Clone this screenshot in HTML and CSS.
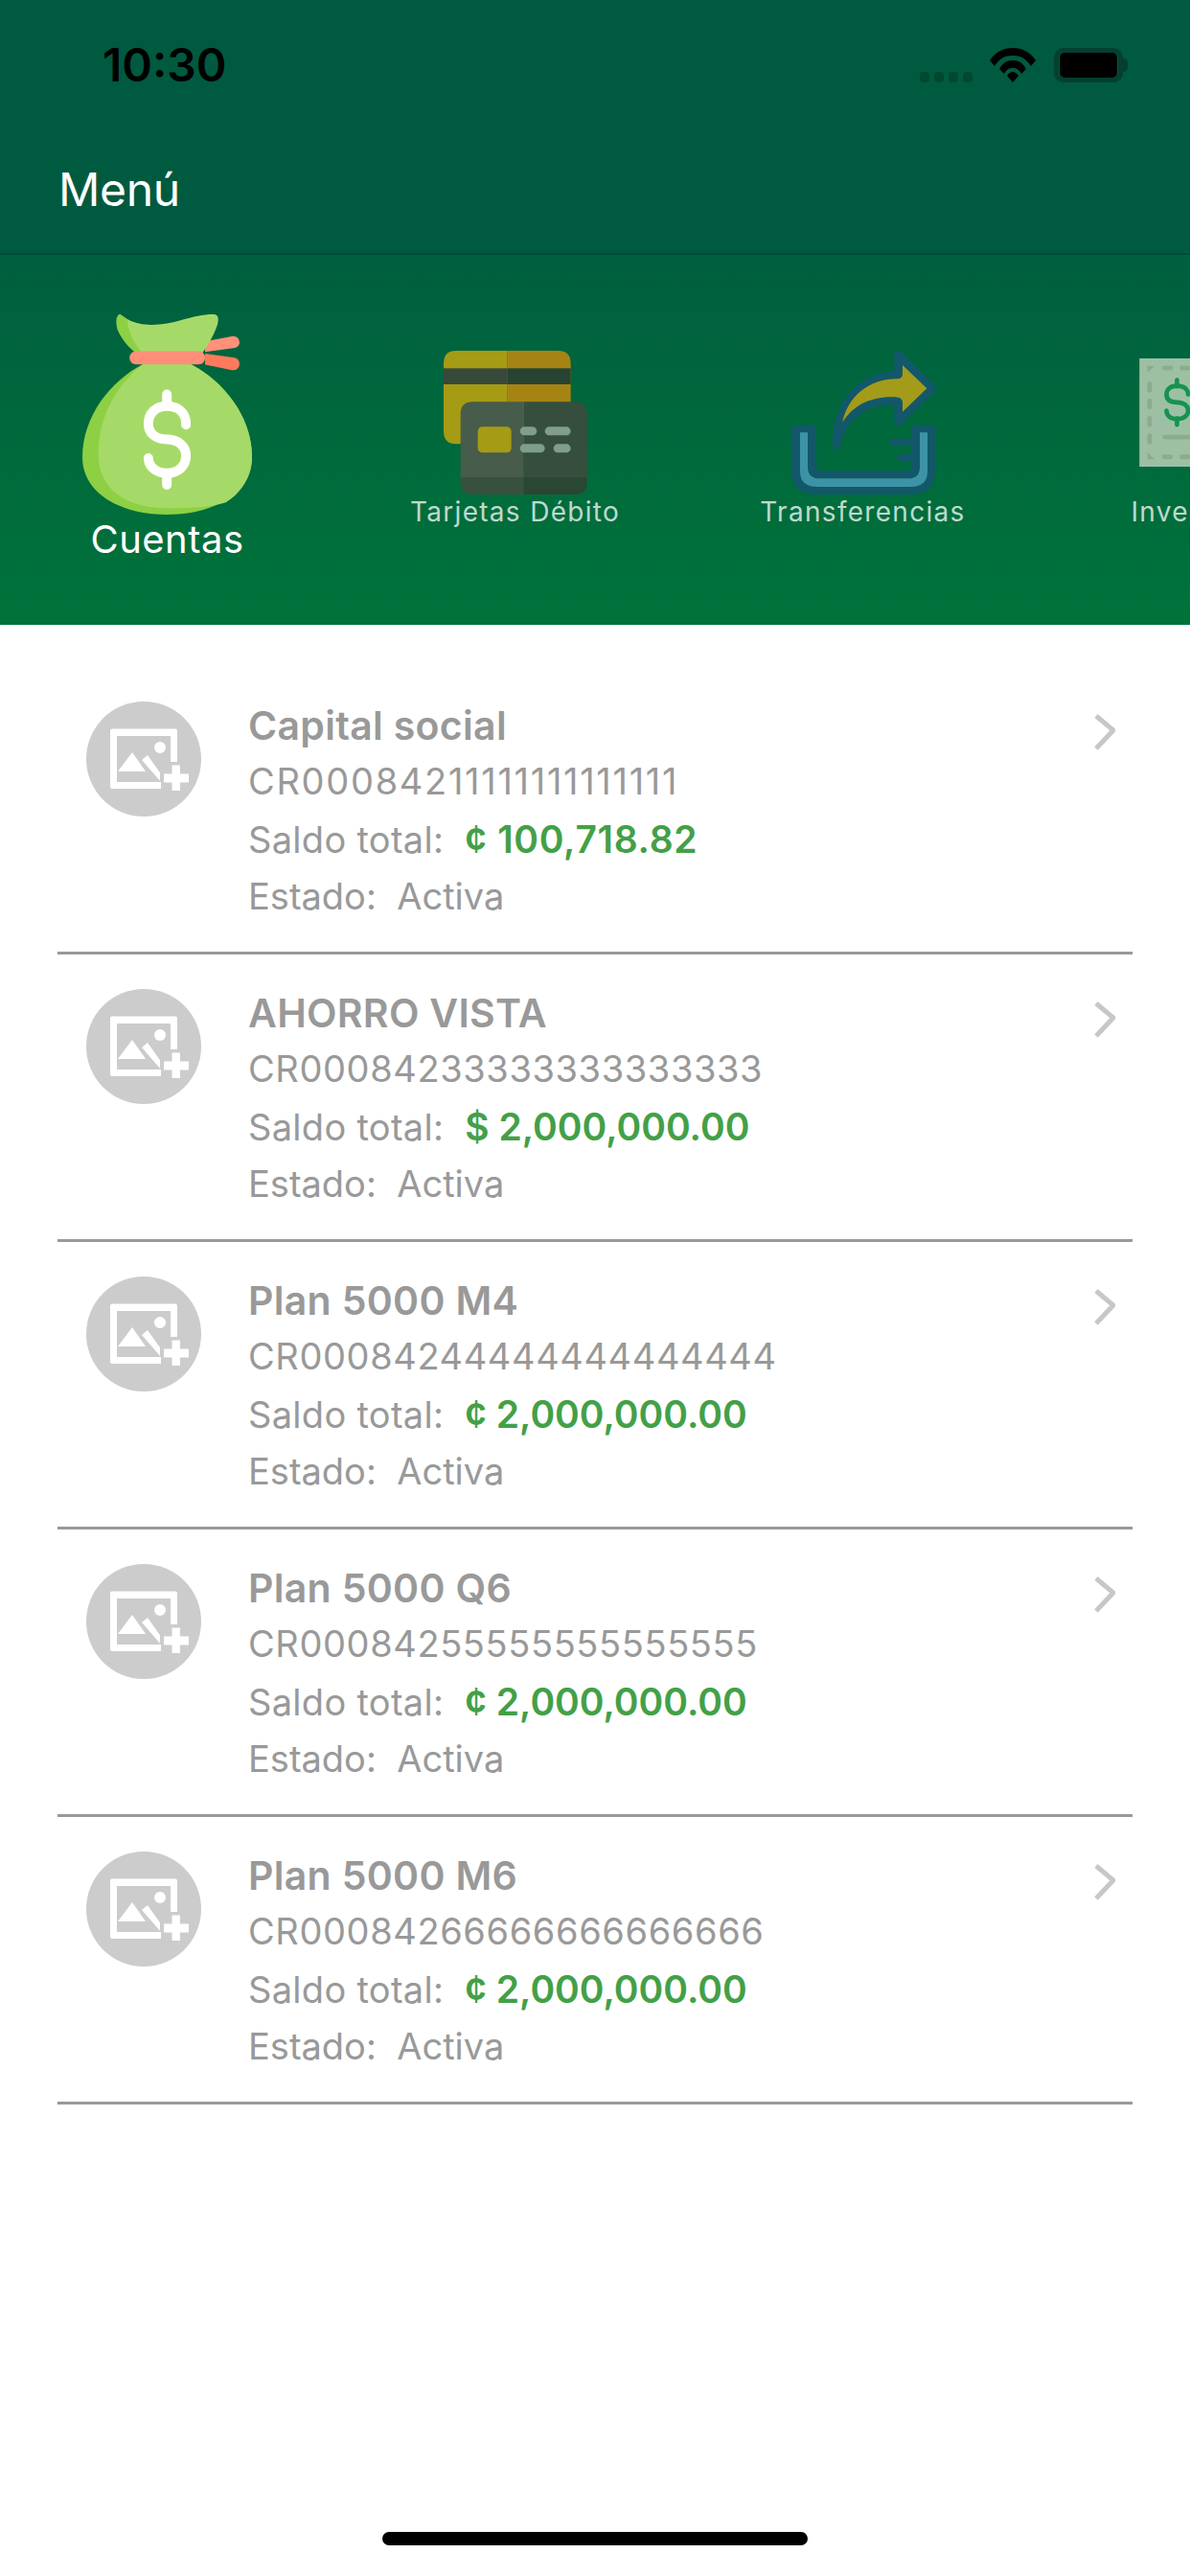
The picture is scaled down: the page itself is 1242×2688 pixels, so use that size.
FILE: index.html
```html
<!DOCTYPE html>
<html lang="es">
<head>
  <meta charset="UTF-8">
  <title>Menú</title>
  <link rel="stylesheet" href="styles.css">
</head>
<body>
  <svg class="defs" width="0" height="0">
    <symbol id="avatar" viewBox="0 0 120 120">
      <circle cx="60" cy="60" r="60" fill="#cccccc"/>
      <path fill="#ffffff" fill-rule="evenodd" d="M27 28.5H93Q95 28.5 95 30.500V91H27Q25 91 25 89V30.500Q25 28.500 27 28.500ZM32 36V84H88V36Z"/>
      <path fill="#ffffff" d="M33 73L48 53L62 73ZM58 61L64 56L84 84H78Z"/>
      <circle cx="77" cy="48" r="6" fill="#ffffff"/>
      <path fill="#cccccc" d="M86 63H100V74H108V90H100V96H78V84H77V74H86Z"/>
      <path fill="#ffffff" d="M89.500 66.500H98V75.500H107V84.500H98V93H89.500V84.500H81V75.500H89.500Z"/>
    </symbol>
  </svg>

  <div class="top-bar">
    <div class="status-bar">
      <span class="time">10:30</span>
      <div class="status-icons">
        <div class="signal"><i></i><i></i><i></i><i></i></div>
        <svg class="wifi" viewBox="0 0 48 36">
          <path d="M0 13C6 4 14 0 24 0S42 4 48 13L43 19C38 11 32 8 24 8S10 11 5 19Z"/>
          <path d="M10 22C14 15 18 13 24 13S34 15 38 22L33 27C30 22 28 21 24 21S18 22 15 27Z"/>
          <path d="M18 29C20 26 22 25 24 25S28 26 30 29L24 36Z"/>
        </svg>
        <div class="battery"><div class="battery-fill"></div></div>
        <div class="battery-nub"></div>
      </div>
    </div>
    <div class="nav-bar">Menú</div>
  </div>

  <div class="menu">
    <div class="menu-item active">
      <svg class="bag" viewBox="140 80 532 632">
        <path fill="#ff9079" d="M525 167L612 150Q632 150 633 170Q632 184 618 187L525 200Z"/>
        <path fill="#ff7a5c" d="M525 205L618 218Q632 222 633 238Q630 258 610 257L525 240Z"/>
        <path fill="#8ed043" d="M330 238C230 290 140 400 140 530C140 650 270 710 405 710C540 710 672 650 672 530C672 400 580 290 480 238Z"/>
        <path fill="#a5da69" d="M330 238C250 300 190 400 190 520C190 640 290 690 405 690C480 690 540 688 590 672C640 640 672 590 672 530C672 400 580 290 480 238Z"/>
        <path fill="#8ed043" d="M258 81C243 85 245 110 250 130C265 165 290 190 310 205H340L300 110Z"/>
        <path fill="#a5da69" d="M282 98C330 125 400 115 450 100C490 88 530 80 555 82C570 85 568 105 560 125C550 150 535 180 515 205H328C300 170 280 130 282 98Z"/>
        <rect x="288" y="198" width="237" height="41" rx="20" fill="#ff8f78"/>
        <g fill="none" stroke="#ffffff" stroke-width="30" stroke-linecap="round">
          <path d="M405 333V358M405 592V617"/>
          <path d="M465 428C465 390 440 370 405 370C370 370 347 392 347 425C347 455 370 474 405 474C440 474 465 495 465 525C465 558 440 580 405 580C370 580 347 558 347 533"/>
        </g>
      </svg>
      <span class="menu-label">Cuentas</span>
    </div>

    <div class="menu-item">
      <svg class="menu-icon" viewBox="190 77 450 450">
        <path fill="#a59b14" d="M230 77H390V369H230Q190 369 190 329V117Q190 77 230 77Z"/>
        <path fill="#a58414" d="M390 77H548Q588 77 588 117V369H390Z"/>
        <rect x="190" y="132" width="200" height="50" fill="#37493b"/>
        <rect x="390" y="132" width="198" height="50" fill="#274333"/>
        <path fill="#475c4b" d="M281 237H441V474H243V275Q243 237 281 237Z"/>
        <path fill="#364e3e" d="M441 237H601Q639 237 639 275V474H441Z"/>
        <path fill="#38503e" d="M243 474H441V527H281Q243 527 243 489Z"/>
        <path fill="#2a4733" d="M441 474H639V489Q639 527 601 527H441Z"/>
        <rect x="297" y="315" width="105" height="81" rx="14" fill="#a59b14"/>
        <g fill="#7f9e8d">
          <rect x="429" y="315" width="53" height="27" rx="13.500"/>
          <rect x="507" y="315" width="81" height="27" rx="13.500"/>
          <rect x="429" y="369" width="78" height="27" rx="13.500"/>
          <rect x="534" y="369" width="54" height="27" rx="13.500"/>
        </g>
      </svg>
      <span class="menu-label">Tarjetas Débito</span>
    </div>

    <div class="menu-item">
      <svg class="menu-icon" viewBox="198 77 450 450">
        <path fill="#12586a" d="M198 322Q198 310 210 310H275V430Q275 453 295 453H555Q575 453 575 430V310H636Q648 310 648 322V450Q648 527 570 527H275Q198 527 198 450Z"/>
        <path fill="#3c93a5" d="M225 333H249V440Q249 477 285 477H565Q600 477 600 440V333H624V455Q624 503 570 503H280Q225 503 225 455Z"/>
        <path stroke="#12586a" stroke-width="22" stroke-linecap="round" d="M515 363H580M541 412H580"/>
        <path fill="#12586a" d="M338 387C325 387 325 360 328 340C340 220 420 145 520 142V90Q530 68 545 85L645 185Q652 195 645 205L545 305Q530 318 520 300V248C440 240 370 290 350 375Q345 387 338 387Z"/>
        <path fill="#a59b1a" d="M546 122L622 195L546 268V235C540 218 520 222 500 222C440 225 390 250 358 300C375 220 440 165 530 165C540 165 546 160 546 150Z"/>
      </svg>
      <span class="menu-label">Transferencias</span>
    </div>

    <div class="menu-item">
      <svg class="menu-icon bill" viewBox="1287 102 450 340">
        <rect x="1287" y="102" width="450" height="340" fill="#9dc0a5"/>
        <g fill="none" stroke="#8bad8d" stroke-width="15" stroke-linecap="round">
          <path d="M1319 182V202M1319 235V255M1319 290V310M1319 345V365M1365 132H1385M1420 132H1440M1365 411H1385M1420 411H1440"/>
        </g>
        <path fill="#8bad8d" d="M1312 125H1335L1312 147ZM1312 396L1335 419H1312Z"/>
        <path fill="none" stroke="#8bad8d" stroke-width="14" stroke-linecap="round" d="M1366 349H1500"/>
        <g fill="none" stroke="#159350" stroke-width="14" stroke-linecap="round">
          <path d="M1405 170V190M1405 290V310"/>
          <path d="M1440 215C1440 198 1425 188 1405 188C1385 188 1372 198 1372 215C1372 232 1385 240 1405 240C1425 240 1440 250 1440 266C1440 282 1425 292 1405 292C1385 292 1372 282 1372 266"/>
        </g>
      </svg>
      <span class="menu-label">Inversiones</span>
    </div>
  </div>

  <div class="accounts">
    <div class="account">
      <svg class="avatar"><use href="#avatar"/></svg>
      <div class="account-info">
        <div class="account-name">Capital social</div>
        <div class="account-line number ones">CR00084211111111111111</div>
        <div class="account-line saldo">Saldo total:&nbsp; <span class="amount ones">¢ 100,718.82</span></div>
        <div class="account-line">Estado:&nbsp; Activa</div>
      </div>
      <svg class="chevron" viewBox="0 0 22 38"><path d="M2 2L20 17L2 36"/></svg>
    </div>
    <div class="account">
      <svg class="avatar"><use href="#avatar"/></svg>
      <div class="account-info">
        <div class="account-name">AHORRO VISTA</div>
        <div class="account-line number">CR00084233333333333333</div>
        <div class="account-line saldo">Saldo total:&nbsp; <span class="amount">$ 2,000,000.00</span></div>
        <div class="account-line">Estado:&nbsp; Activa</div>
      </div>
      <svg class="chevron" viewBox="0 0 22 38"><path d="M2 2L20 17L2 36"/></svg>
    </div>
    <div class="account">
      <svg class="avatar"><use href="#avatar"/></svg>
      <div class="account-info">
        <div class="account-name">Plan 5000 M4</div>
        <div class="account-line number">CR00084244444444444444</div>
        <div class="account-line saldo">Saldo total:&nbsp; <span class="amount">¢ 2,000,000.00</span></div>
        <div class="account-line">Estado:&nbsp; Activa</div>
      </div>
      <svg class="chevron" viewBox="0 0 22 38"><path d="M2 2L20 17L2 36"/></svg>
    </div>
    <div class="account">
      <svg class="avatar"><use href="#avatar"/></svg>
      <div class="account-info">
        <div class="account-name">Plan 5000 Q6</div>
        <div class="account-line number">CR00084255555555555555</div>
        <div class="account-line saldo">Saldo total:&nbsp; <span class="amount">¢ 2,000,000.00</span></div>
        <div class="account-line">Estado:&nbsp; Activa</div>
      </div>
      <svg class="chevron" viewBox="0 0 22 38"><path d="M2 2L20 17L2 36"/></svg>
    </div>
    <div class="account">
      <svg class="avatar"><use href="#avatar"/></svg>
      <div class="account-info">
        <div class="account-name">Plan 5000 M6</div>
        <div class="account-line number">CR00084266666666666666</div>
        <div class="account-line saldo">Saldo total:&nbsp; <span class="amount">¢ 2,000,000.00</span></div>
        <div class="account-line">Estado:&nbsp; Activa</div>
      </div>
      <svg class="chevron" viewBox="0 0 22 38"><path d="M2 2L20 17L2 36"/></svg>
    </div>
  </div>

  <div class="home-indicator"></div>
</body>
</html>
```

FILE: styles.css
```css
html, body {
  margin: 0;
  padding: 0;
}

body {
  width: 1242px;
  height: 2688px;
  overflow: hidden;
  position: relative;
  background-color: #ffffff;
  font-family: Inter, "Noto Sans", sans-serif;
}

.defs {
  position: absolute;
}

.top-bar {
  height: 264px;
  background-color: #005a40;
  border-bottom: 2px solid #04493a;
}

.status-bar {
  height: 132px;
  display: flex;
  justify-content: space-between;
  padding: 0 65px 0 107px;
  box-sizing: border-box;
}

.time {
  font-size: 48px;
  font-weight: 600;
  line-height: 136px;
  color: #000000;
}

.status-icons {
  display: flex;
  padding-top: 50px;
  height: 36px;
}

.signal {
  display: flex;
  gap: 5px;
  margin-top: 25px;
  margin-right: 18px;
}

.signal i {
  width: 10px;
  height: 11px;
  border-radius: 4px;
  background-color: #00482f;
}

.wifi {
  width: 48px;
  height: 36px;
  margin-right: 19px;
  fill: #000000;
}

.battery {
  width: 72px;
  height: 36px;
  box-sizing: border-box;
  border: 5px solid #043f30;
  border-radius: 10px;
}

.battery-fill {
  height: 100%;
  background-color: #000000;
  border-radius: 5px;
  margin: 0 1px;
}

.battery-nub {
  width: 5px;
  height: 14px;
  margin-top: 11px;
  background-color: #043f30;
  border-radius: 0 5px 5px 0;
}

.nav-bar {
  padding-left: 61px;
  padding-top: 33px;
  font-size: 48px;
  line-height: 66px;
  color: #ffffff;
  letter-spacing: -0.3px;
}

.menu {
  height: 386px;
  background: linear-gradient(#005f3f, #00733a);
  display: flex;
  align-items: center;
  margin-left: -7px;
  overflow: hidden;
}

.menu-item {
  flex: 0 0 363px;
  display: flex;
  flex-direction: column;
  align-items: center;
  white-space: nowrap;
  padding-top: 2px;
}

.menu-icon {
  width: 150px;
  height: 150px;
}

.bill {
  height: 113px;
  margin: 8px 0 29px;
}

.bag {
  width: 177px;
  height: 211px;
}

.menu-label {
  font-size: 28px;
  line-height: 40px;
  margin-top: -2px;
  color: rgba(255, 255, 255, 0.75);
  letter-spacing: 1.3px;
}

.menu-item.active {
  padding-top: 0;
  padding-bottom: 4px;
}

.active .menu-label {
  font-size: 40px;
  line-height: 50px;
  margin-top: 0;
  color: #ffffff;
  letter-spacing: 0.5px;
}

.accounts {
  padding: 44px 60px 0;
}

.account {
  height: 300px;
  box-sizing: border-box;
  border-bottom: 3px solid #999999;
  display: flex;
  align-items: flex-start;
  padding: 32px 18px 0 30px;
}

.avatar {
  width: 120px;
  height: 120px;
  margin-top: 4px;
  margin-right: 49px;
  flex: none;
}

.account-info {
  flex: 1;
  color: #999999;
  font-size: 38px;
  line-height: 59.500px;
}

.account-name {
  font-size: 41px;
  font-weight: 600;
  line-height: 58px;
  letter-spacing: 0.3px;
}

.number {
  letter-spacing: 0.6px;
}

.number.ones {
  letter-spacing: 1.7px;
}

.saldo {
  letter-spacing: 0.3px;
}

.amount {
  font-size: 39px;
  font-weight: 600;
  color: #43a047;
  letter-spacing: 0;
}

.amount.ones {
  letter-spacing: 0.7px;
}

.chevron {
  width: 22px;
  height: 38px;
  margin-top: 17px;
  flex: none;
}

.chevron path {
  fill: none;
  stroke: #c7c7c7;
  stroke-width: 5;
}

.home-indicator {
  position: absolute;
  left: 399px;
  bottom: 32px;
  width: 444px;
  height: 14px;
  border-radius: 7px;
  background-color: #000000;
}
```
